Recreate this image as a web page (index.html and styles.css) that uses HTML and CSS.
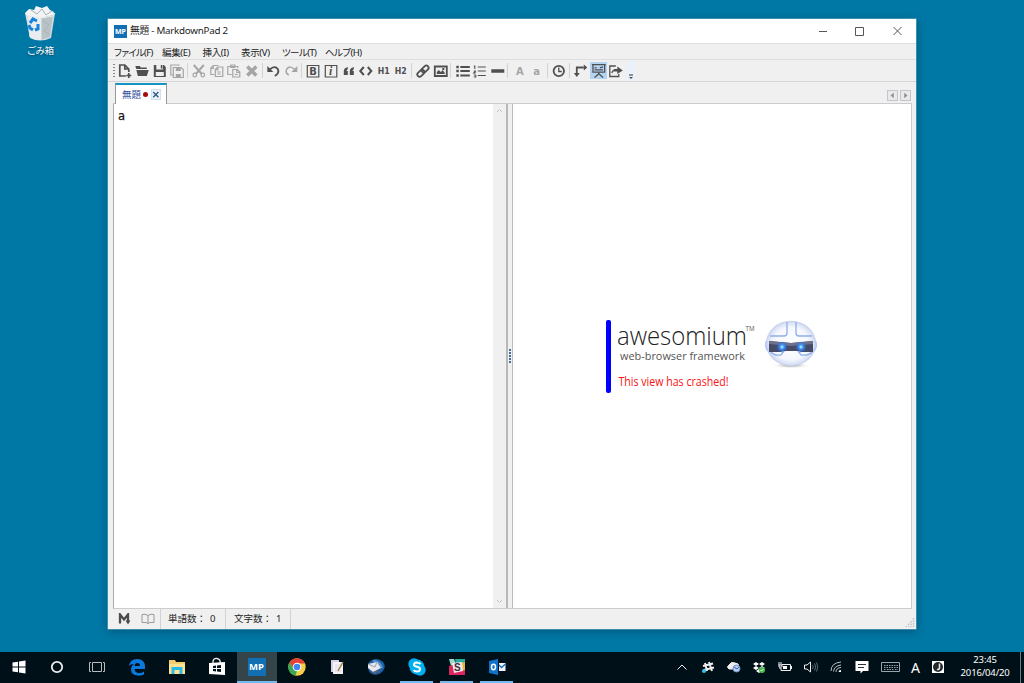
FILE: index.html
```html
<!DOCTYPE html>
<html lang="ja">
<head>
<meta charset="utf-8">
<title>MarkdownPad 2</title>
<link rel="stylesheet" href="styles.css">
</head>
<body>
<main class="desktop">
  <div class="trash">
    <svg width="32" height="36" viewBox="0 0 32 36">
      <path d="M1 8 31 8 27 33Q16 38 6 33Z" fill="#d6dcdf"/>
      <path d="M1 8 5 4 10 5 12 1 18 3 23 1 26 5 30 7 28 11 17 13 4 11Z" fill="#f1f3f4"/>
      <path d="M4 11 17 13 17 35Q9 35 6 32Z" fill="#e9edef"/>
      <path d="M17 13 29 10 26 32 17 35Z" fill="#b9c2c6"/>
      <path d="M7 5 13 9 18 4 22 10 28 6M19 16 25 20 20 26 25 29" stroke="#a9b2b6" fill="none"/>
      <path d="M1 8 4 11 17 13 29 11 31 8M4 11 6 32M17 13V35" stroke="#e6ebed" fill="none"/>
      <path d="M6 18 9 14 13 16M14 19 14 24 11 25M9 25 6 23 5 20" stroke="#1683dc" stroke-width="3" fill="none"/>
    </svg>
    <span>ごみ箱</span>
  </div>

  <section class="window">
    <header class="titlebar">
      <span class="mp small">MP</span><h1>無題 - MarkdownPad 2</h1>
      <svg class="controls" width="90" height="12" viewBox="0 0 90 12" fill="none" stroke="#555"><path d="M1 6.500H9M37.500 2.500H45.500V10.500H37.500ZM75.500 2 83.500 10M83.500 2 75.500 10"/></svg>
    </header>
    <nav class="menu"><span class="m1">ファイル(F)</span><span class="m2">編集(E)</span><span class="m3">挿入(I)</span><span class="m4">表示(V)</span><span class="m5">ツール(T)</span><span class="m6">ヘルプ(H)</span></nav>

    <div class="toolbar">
      <i class="grip"></i>
      <svg viewBox="0 0 16 16"><path d="M9 13H3V2H8L12 6V9M8 2V6H12M12 10V15M9.500 12.500H14.500" stroke-width="1.700"/></svg>
      <svg viewBox="0 0 16 16"><path d="M1.500 3H6L7 4.500H13V6H2.500Z" class="f"/><path d="M2.500 7H15L13 13H4Z" class="f"/></svg>
      <svg viewBox="0 0 16 16"><path d="M2 2H12L14 4V14H2Z" class="f"/><path d="M4.500 2H11V6.500H4.500ZM4 9H12V13H4Z" fill="#eee" stroke="none"/><path d="M9 2H10.500V5.500H9Z" class="f"/></svg>
      <svg class="dim" viewBox="0 0 16 16"><path d="M4 12H2V2H10V3M4.500 4.500H12.500L14.500 6.500V14.500H4.500Z"/><path d="M7 4.500H12V8H7ZM7 11H12V14H7Z" class="f"/></svg>
      <b class="sep"></b>
      <svg class="dim" viewBox="0 0 16 16"><path d="M3 2 11 11M13 2 5 11" stroke-width="2"/><circle cx="4" cy="12" r="1.800"/><circle cx="12" cy="12" r="1.800"/></svg>
      <svg class="dim" viewBox="0 0 16 16"><path d="M5.500 11.500H2V5L4.500 2.500H9V3M6.500 6.500 9 4H14V13.500H6.500ZM9 4V7H6.500M4.500 3V5.500H2M8.500 9H12M8.500 11H12"/></svg>
      <svg class="dim" viewBox="0 0 16 16"><path d="M6 11.500H2V3.500H12V5M5 2H9V4.500H5ZM7 6.500H11.500L14 9V14H7ZM11 6.500V9.500H14M9 11.500H12"/></svg>
      <svg class="dim" viewBox="0 0 16 16"><path d="M3.500 3.500 12.500 12.500M12.500 3.500 3.500 12.500" stroke-width="3.500"/></svg>
      <b class="sep"></b>
      <svg viewBox="0 0 16 16"><path d="M4 6.500Q9 2 12 6Q14 10 9 13" stroke-width="1.800"/><path d="M1.500 3V9H7.500Z" class="f"/></svg>
      <svg class="dim" viewBox="0 0 16 16"><path d="M12 6.500Q7 2 4 6Q2 10 6 12" stroke-width="1.500"/><path d="M14.500 3V9H8.500Z" class="f"/></svg>
      <b class="sep"></b>
      <svg viewBox="0 0 16 16"><path d="M2.500 2.500H14V14H2.500Z"/><text x="4.500" y="12">B</text></svg>
      <svg viewBox="0 0 16 16"><path d="M2.500 2.500H14V14H2.500Z"/><text class="it" x="6.300" y="12.300">i</text></svg>
      <svg viewBox="0 0 16 16"><path d="M3 12V8Q3 5 7 4V6L5.500 8H7V12ZM9 12V8Q9 5 13 4V6L11.500 8H13V12Z" class="f"/></svg>
      <svg viewBox="0 0 16 16"><path d="M6 4 2.500 8 6 12M10 4 13.500 8 10 12" stroke-width="2"/></svg>
      <svg viewBox="0 0 16 16"><text class="hd" x="2" y="11.300" textLength="12" lengthAdjust="spacingAndGlyphs">H1</text></svg>
      <svg viewBox="0 0 16 16"><text class="hd" x="2" y="11.300" textLength="12" lengthAdjust="spacingAndGlyphs">H2</text></svg>
      <b class="sep"></b>
      <svg viewBox="0 0 16 16"><g transform="rotate(-45 8 8)" stroke-width="1.800"><rect x="1" y="6" width="8" height="4.500" rx="2.200"/><rect x="7" y="6" width="8" height="4.500" rx="2.200"/></g></svg>
      <svg viewBox="0 0 16 16"><path d="M2 3.500H14V13H2Z" stroke-width="1.800"/><path d="M4 11V9L6 7 8 9 10 7 12 10V11ZM9.500 5H11.500V7H9.500Z" class="f"/></svg>
      <b class="sep"></b>
      <svg viewBox="0 0 16 16"><path d="M5.500 4H15M5.500 8H15M5.500 12.500H15" stroke-width="1.800"/><path d="M1.500 4H4M1.500 8H4M1.500 12.500H4" stroke-width="2.500"/></svg>
      <svg viewBox="0 0 16 16"><path d="M6 4H14M6 8H14M6 12.500H14M2 3H3V6M2 8H4M2 12H4M4 8 2 10H4M4 12V14H2" stroke-width="1.100"/></svg>
      <svg viewBox="0 0 16 16"><path d="M1.500 8H14.500" stroke-width="3.500"/></svg>
      <b class="sep"></b>
      <svg class="dim" viewBox="0 0 16 16"><text x="4.300" y="12" font-size="11">A</text></svg>
      <svg class="dim" viewBox="0 0 16 16"><text x="4.500" y="12" font-size="11">a</text></svg>
      <b class="sep"></b>
      <svg viewBox="0 0 16 16"><circle cx="8" cy="8" r="5.200" stroke-width="1.800"/><path d="M8 4.500V8.500H11" stroke-width="1.300"/></svg>
      <b class="sep"></b>
      <svg viewBox="0 0 16 16"><path d="M4 10V4.500H11" stroke-width="1.800"/><path d="M11 1.500 14.500 4.500 11 7.500ZM1 10H7L4 14Z" class="f"/></svg>
      <svg class="on" viewBox="0 0 16 16"><path d="M1.500 2.500H14.500M2.500 3V9.500H13.500V3M8 10V12M8 11 4 14.500M8 11 12 14.500M4 5.500H6M4 7.500H12M9 5.500 12 4.500"/></svg>
      <svg viewBox="0 0 16 16"><path d="M8 3H2V13.500H11V11M4 10Q5 6 10 7" stroke-width="1.300"/><path d="M9.500 3.500 15 7.500 9.500 11V8.500H6V6H9.500Z" class="f"/></svg>
      <svg class="over" viewBox="0 0 8 20"><path d="M2 14H6"/><path d="M2 16H6L4 18Z" class="f"/></svg>
    </div>

    <div class="tabs">
      <div class="tab"><span>無題</span><i class="dirty"></i><svg class="close" width="10" height="11" viewBox="0 0 10 11"><path d="M1.500 2.500 8 9M8 2.500 1.500 9"/></svg></div>
      <div class="scrolls"><svg width="11" height="11" viewBox="0 0 11 11"><path d="M7 2V9L3 5.500Z"/></svg><svg width="11" height="11" viewBox="0 0 11 11"><path d="M4 2V9L8 5.500Z"/></svg></div>
    </div>

    <div class="work">
      <div class="editor">a</div>
      <div class="scrollbar"><svg width="7" height="5" viewBox="0 0 7 5"><path d="M1 4 3.500 1.500 6 4"/></svg><svg width="7" height="5" viewBox="0 0 7 5"><path d="M1 1 3.500 3.500 6 1"/></svg></div>
      <div class="splitter"><i></i><i></i><i></i><i></i><i></i></div>
      <div class="preview">
        <div class="crash">
          <div class="bar"></div>
          <svg class="brand" width="214" height="86" viewBox="0 -10 214 86">
            <defs><radialGradient id="orb"><stop offset="0" stop-color="#fff"/><stop offset=".7" stop-color="#f6f8fe"/><stop offset=".9" stop-color="#dbe3f6"/><stop offset="1" stop-color="#c0cce8"/></radialGradient>
            <radialGradient id="eye"><stop offset="0" stop-color="#e5fbff"/><stop offset=".3" stop-color="#48a5ff"/><stop offset="1" stop-color="#145eff" stop-opacity="0"/></radialGradient>
            <radialGradient id="shade"><stop offset="0" stop-color="#888"/><stop offset="1" stop-color="#fff" stop-opacity="0"/></radialGradient></defs>
            <g class="logo">
            <text x="6" y="25" font-size="26.500" font-weight="300" fill="#222" textLength="130" lengthAdjust="spacingAndGlyphs">awesomium</text>
            <text x="134.500" y="10.500" font-size="7.500" fill="#555" textLength="9" lengthAdjust="spacingAndGlyphs">TM</text>
            <text x="9" y="40" font-size="11.500" fill="#555" textLength="125" lengthAdjust="spacingAndGlyphs">web-browser framework</text>
            <text x="7.500" y="65.500" font-size="12" fill="#f91212" textLength="110" lengthAdjust="spacingAndGlyphs">This view has crashed!</text>
            </g>
            <ellipse cx="180" cy="45.500" rx="20" ry="3" fill="url(#shade)"/>
            <ellipse cx="180" cy="23.500" rx="25" ry="22.800" fill="url(#orb)"/>
            <path d="M176 2V13Q176 16 173 16H159M185 2V13Q185 16 188 16H201M160 32Q163 36 170 35L173 31M201 32Q198 36 190 35L187 31" fill="none" stroke="#8eafe6" stroke-width="1.300"/>
            <path d="M155.500 21Q153 26 157 31M204.500 21Q207 26 203 31" fill="none" stroke="#b3c9fb" stroke-width="1.500"/>
            <path d="M158 21 180 23 202 21V32H190L188 31H172L170 32H158Z" fill="#454a66"/>
            <path d="M158 21 180 23 202 21V24L180 26 158 24Z" fill="#6e718a"/>
            <circle cx="171" cy="27" r="6" fill="url(#eye)"/><circle cx="190" cy="27" r="6" fill="url(#eye)"/>
          </svg>
        </div>
      </div>
    </div>

    <footer class="status">
      <div class="modes"><svg width="13" height="12" viewBox="0 0 13 12"><path d="M2 10.500V1.500L6 6.500 10 1.500V8" fill="none" stroke="#4b4b4b" stroke-width="2.300"/><path d="M7.500 7.500H12.500L10 11.500Z" fill="#4b4b4b"/></svg><svg width="14" height="12" viewBox="0 0 14 12" fill="none" stroke="#999"><path d="M7 2.500Q4 .500 1 1.500V9.500H5Q7 10 7 11Q7 10 9 9.500H13V1.500Q10 .500 7 2.500V10"/></svg></div>
      <div class="count c1"><span>単語数：</span><span>0</span></div><div class="count c2"><span>文字数：</span><span>1</span></div>
      <svg class="resize" width="10" height="10" viewBox="0 0 10 10"><path d="M8.500 1V10M6 4V10M3.500 6.500V10M1 9V10" stroke="#bcc1c9" stroke-width="1.500" stroke-dasharray="1.500 1"/></svg>
    </footer>
  </section>
</main>

<footer class="taskbar">
  <div class="apps">
    <div class="start"><svg width="14" height="14" viewBox="0 0 14 14" fill="#fff"><path d="M.500 2.500 6 1.700V6.500H.500ZM7 1.500 13.500.500V6.500H7ZM.500 7.500H6V12.300L.500 11.500ZM7 7.500H13.500V13.500L7 12.500Z"/></svg></div>
    <div><svg width="14" height="14" viewBox="0 0 14 14"><circle cx="7" cy="7" r="5.200" fill="none" stroke="#eee" stroke-width="1.800"/></svg></div>
    <div><svg width="18" height="14" viewBox="0 0 18 14" fill="none" stroke="#bbb"><path d="M4.500 2.500H13.500V11.500H4.500ZM3 2.500H1.500V11.500H3M15 2.500H16.500V11.500H15"/></svg></div>
    <div><svg width="18" height="18" viewBox="0 0 18 18"><path d="M1 8Q2 1 9 1Q17 1 17 9V11H6.500Q7 15 11 15Q14 15 16 13.500V16.500Q13 18 9.500 17.500Q3 17 3 11.500Q3 8 6 6Q3 5.500 1 8ZM6.500 8H12Q12 5 9.500 5Q7 5 6.500 8Z" fill="#0b78dc" fill-rule="evenodd"/></svg></div>
    <div><svg width="18" height="16" viewBox="0 0 18 16"><path d="M1 1H7L8 3H17V15H1Z" fill="#f5cd6a"/><path d="M1 5H17V15H1Z" fill="#ffe294"/><path d="M3.500 15V8H14.500V15H11.500V11H6.500V15Z" fill="#28b9e7"/></svg></div>
    <div><svg width="18" height="20" viewBox="0 0 18 20"><path d="M5 7V4Q6 1 9 1.500Q13 2 12 7" fill="none" stroke="#eee" stroke-width="1.300"/><path d="M1 6 17 5V18L1 17Z" fill="#fff"/><path d="M5 9 8 8.500V11H5ZM9 8.500 13 8V11H9ZM5 12H8V14.500L5 14ZM9 12H13V15L9 14.500Z" fill="#001018"/></svg></div>
    <div class="active"><span class="mp">MP</span></div>
    <div><svg width="18" height="18" viewBox="0 0 18 18"><circle cx="9" cy="9" r="8.700" fill="#f7ce45"/><path d="M1.500 4.500A8.700 8.700 0 0 1 17 5.500H9L5.500 11Z" fill="#e24236"/><path d="M1.500 4.500 5.500 11 9 13 7.500 17.600A8.700 8.700 0 0 1 1.500 4.500Z" fill="#34a853"/><circle cx="9" cy="9" r="4.300" fill="#fff"/><circle cx="9" cy="9" r="3.300" fill="#4285f4"/></svg></div>
    <div><svg width="16" height="16" viewBox="0 0 16 16"><path d="M2 1H10V13H2Z" fill="#d5cfdf"/><path d="M4 3H14V15H4Z" fill="#f4f3f8"/><path d="M6 6H12M6 8H12M6 10H10M6 12H13" stroke="#dcd9e6"/><path d="M9 12 14 3" stroke="#a87945" stroke-width="1.500"/></svg></div>
    <div><svg width="19" height="18" viewBox="0 0 19 18"><path d="M5 2Q11-1 16 4Q20 9 15 14Q11 18 5 16Q1 14 1 8Q1 4 5 2Z" fill="#1d61a8"/><path d="M6 3Q13 3 15 10" fill="none" stroke="#5d99d5" stroke-width="2"/><path d="M1 6 10 4 14 10 6 14 1 10Z" fill="#e8e8ec"/><path d="M1 6 8 9 10 4" fill="none" stroke="#999eb1"/><path d="M2 11 6 14 12 12 8 16Z" fill="#77605e"/></svg></div>
    <div class="running"><svg width="18" height="18" viewBox="0 0 18 18"><circle cx="6" cy="6" r="5.700" fill="#00aff0"/><circle cx="12" cy="12" r="5.700" fill="#00aff0"/><circle cx="9" cy="9" r="7.500" fill="#00aff0"/><path d="M12.500 6Q11 4.500 8.500 4.500Q6 4.700 6 6.700Q6 8.200 9 8.800Q12 9.500 12 11Q12 13.500 9 13.500Q6.500 13.500 5.500 12" fill="none" stroke="#fff" stroke-width="2"/></svg></div>
    <div class="running"><svg width="18" height="18" viewBox="0 0 18 18"><path d="M1 1H6L8 6 3 8Z" fill="#9cdad2"/><path d="M7 1H17V5L8 7Z" fill="#25ae9a"/><path d="M12 5 17 4V13L14 14Z" fill="#e9b533"/><path d="M1 8 5 7 7 14 17 12V17H1Z" fill="#dc245e"/><path d="M4 5 14 4 15 13 6 15Z" fill="#f1e9ea"/><text x="6" y="13" font-family="Liberation Sans" font-weight="700" font-size="10" fill="#462a3a">S</text></svg></div>
    <div class="running"><svg width="18" height="18" viewBox="0 0 18 18"><path d="M1 3 10 1V17L1 15Z" fill="#0f73cb"/><path d="M11 5H17.500V13H11Z" fill="#eef5fc"/><path d="M11 7 13.500 9.500 17.500 6" fill="none" stroke="#126dc0" stroke-width="1.300"/><ellipse cx="5.500" cy="9" rx="2" ry="2.700" fill="none" stroke="#fff" stroke-width="1.500"/></svg></div>
  </div>
  <div class="tray">
    <div><svg viewBox="0 0 16 16"><path d="M3.500 10.500 8 6 12.500 10.500"/></svg></div>
    <div><svg viewBox="0 0 16 16"><path d="M5 4 7 12M9 3 12 12M3 7 13 4.500M4 11 14 8.500" stroke-width="2"/><circle cx="4" cy="12" r="2" fill="#31c6ed" stroke="none"/></svg></div>
    <div><svg viewBox="0 0 16 16"><path d="M3 10Q0 8 3 6Q5 2 9 4Q13 4 13 8V10Z" fill="#eee"/><circle cx="10.500" cy="9.500" r="3.500" fill="#b8cdf0" stroke="#6f91c9"/><path d="M8 8 11 10 13 8" stroke="#3464b4"/></svg></div>
    <div><svg viewBox="0 0 16 16"><path d="M2 5 5 3 8 5 11 3 14 5 11 7 14 9 11 11 8 9 5 11 2 9 5 7ZM5 12 8 10 11 12 8 14Z" fill="#fff" stroke="none"/><path d="M5 7 8 5 11 7 8 9Z" fill="#001018" stroke="none"/><circle cx="11" cy="11" r="3" fill="#44bd4a" stroke="none"/><path d="M9.500 11 10.500 12 12.500 10"/></svg></div>
    <div><svg viewBox="0 0 16 16"><path d="M5 5.500H13.500V11.500H4V9M14.500 7V10M2 3V6M4 3V6M1.500 6H5V8H2V6M3 8V10"/><path d="M6 7H10V10H6Z" fill="#fff" stroke="none"/></svg></div>
    <div><svg viewBox="0 0 16 16"><path d="M1.500 6H4L7.500 3V13L4 10H1.500Z"/><path d="M9.500 6Q11 8 9.500 10M11.500 4.500Q14 8 11.500 11.500M13.500 3.500Q16 8 13.500 12.500" stroke="#718087" stroke-width=".800"/></svg></div>
    <div><svg viewBox="0 0 16 16"><path d="M3 12Q3 4 13 3M5.500 12.500Q6 7 13 6M8 13Q8 9 13 8.500" stroke="#b9c0c3"/><path d="M10.500 13Q10.500 11 13 11V13Z" fill="#fff" stroke="none"/></svg></div>
    <div><svg viewBox="0 0 16 16"><path d="M1.500 2H14.500V12H9L6.500 14.500V12H1.500Z" fill="#fff" stroke="none"/><path d="M4 5.500H12M4 8.500H10" stroke="#26343a"/></svg></div>
    <div class="kbd"><svg width="19" height="12" viewBox="0 0 19 12"><path d="M.500 1.500H18.500V10.500H.500Z"/><path d="M3 4.500H17M3 6.500H17M3 8.500H5M6 8.500H13M14 8.500H17" stroke-dasharray="1.500 1"/></svg></div>
    <div class="ime">A</div>
    <div class="input"><svg viewBox="0 0 16 16"><path d="M2 2H14V14H2Z" fill="#fff" stroke="none"/><circle cx="8" cy="8" r="5" fill="#20292e" stroke="none"/><path d="M9.500 4.500V9Q9 11 7 10.500" stroke-width="1.500"/></svg></div>
  </div>
  <div class="clock"><span>23:45</span><span class="date">2016/04/20</span></div>
</footer>
</body>
</html>
```
FILE: styles.css
```css
* { box-sizing: border-box; }
body { margin: 0; width: 1024px; height: 683px; display: flex; flex-direction: column; overflow: hidden; background: #0078a5; font-family: "Noto Sans", "Noto Sans CJK JP", sans-serif; color: #222; }
svg { display: block; flex: none; }
.desktop { height: 652px; flex: none; display: flex; align-items: flex-start; }
.trash { width: 108px; padding: 5px 28px 0 0; display: flex; flex-direction: column; align-items: center; color: #fff; font: 9.500px/16px "Noto Sans CJK JP", sans-serif; }
.trash span { letter-spacing: -.6px; white-space: nowrap; margin-top: 1px; text-shadow: 0 1px 2px #003d5a; }
.window { width: 808px; height: 610px; margin-top: 19px; background: #f0f0f0; display: flex; flex-direction: column; box-shadow: 0 0 0 .5px #78b8cf, 0 2px 9px #003a5c99; }
.titlebar { height: 25px; flex: none; display: flex; align-items: center; background: #fff; border-bottom: 1px solid #dedede; padding-left: 6px; }
.mp { width: 18px; height: 18px; display: flex; align-items: center; justify-content: center; background: #136fb4; color: #fff; font: 700 9.500px/18px "Noto Sans", sans-serif; }
.mp.small { width: 13px; height: 13px; font-size: 7px; line-height: 13px; }
.titlebar h1 { margin: 0 0 0 3px; font-weight: 400; font-size: 9.800px; line-height: 20px; letter-spacing: -.27px; white-space: nowrap; }
.controls { margin: 0 8px 0 auto; }
.menu { height: 16px; flex: none; display: flex; padding-left: 6px; border-bottom: 1px solid #dedede; font-size: 9.500px; line-height: 17px; white-space: nowrap; }
.menu span { letter-spacing: -.35px; }
.m1 { width: 48px; letter-spacing: -.7px !important; } .m2 { width: 40.500px; } .m3 { width: 38.500px; } .m4 { width: 41px; } .m5 { width: 43px; }
.m1, .m5, .m6 { font-feature-settings: "palt"; }
.m5, .m6 { letter-spacing: -.6px !important; }
.toolbar { height: 22px; flex: none; display: flex; align-items: center; padding-left: 5px; border-bottom: 1px solid #d5d5d5; }
.grip { width: 2px; height: 13px; margin: 0 .5px 0 0; background: repeating-linear-gradient(#888 0 1px, transparent 1px 3px); }
.toolbar svg { width: 17.600px; height: 16px; fill: none; stroke: #505050; stroke-width: 1.200; }
.toolbar .f { fill: #505050; stroke: none; }
.toolbar text { fill: #505050; stroke: none; font: 700 10px "DejaVu Sans", sans-serif; }
.toolbar .it { font: italic 700 12px "Liberation Serif", serif; }
.toolbar .hd { font-size: 9px; }
.toolbar .dim { stroke: #a5a5a5; }
.toolbar .dim .f, .toolbar .dim text { fill: #a5a5a5; }
.toolbar .on { background: #b4d4f4; height: 17px; }
.toolbar .over { width: 8px; height: 20px; margin-left: 2px; background: #e9f1fa; }
.sep { width: 4.300px; height: 15px; border-left: 1px solid #d2d2d2; margin-left: 1px; margin-right: -1px; }
.tabs { height: 21px; flex: none; display: flex; justify-content: space-between; padding: 1px 5px 0 7px; }
.tab { width: 52px; height: 21px; background: #fff; border: 1px solid #999; border-top: 2px solid #1496c5; border-bottom: 0; display: flex; align-items: center; padding-left: 6px; z-index: 1; font: 9.500px/17px "Noto Sans CJK JP", sans-serif; color: #3550a0; }
.dirty { width: 5px; height: 5px; margin-left: 2px; border-radius: 50%; background: #a60b10; }
.close { margin-left: 3px; background: #edf2f7; border: 1px solid #d3e0ed; fill: none; stroke: #285b91; stroke-width: 1.700; }
.scrolls { display: flex; gap: 2px; padding: 7px 0 0; }
.scrolls svg { border: 1px solid #c4c4ce; background: #e9e9e9; fill: #8e8e94; }
.work { height: 506px; flex: none; margin: 0 4px 0 5px; display: flex; border: 1px solid #ccc; border-left-color: #aaa; background: #fff; }
.editor { width: 379px; flex: none; padding: 3px 4px; font: 500 11.500px/18px "DejaVu Sans", sans-serif; color: #111; -webkit-text-stroke: .25px #111; }
.scrollbar { width: 13px; flex: none; display: flex; flex-direction: column; justify-content: space-between; align-items: center; padding: 4px 0; background: #f0f0f0; fill: none; stroke: #c4c4c4; }
.splitter { width: 7px; flex: none; border-left: 2px solid #b8b8b8; border-right: 1px solid #bbb; background: #f0f0f0; display: flex; flex-direction: column; justify-content: center; align-items: center; gap: 1px; }
.splitter i { width: 2px; height: 2px; background: #416da4; }
.preview { flex: 1; padding: 216px 0 0 93px; }
.crash { display: flex; height: 76px; }
.bar { width: 5px; height: 73px; border-radius: 2px; background: #00f; }
.brand { margin-top: -10px; }
.logo text { font-family: "Open Sans", "Noto Sans", sans-serif; }
.status { flex: 1; display: flex; font-size: 9.500px; line-height: 19px; }
.modes { width: 52px; display: flex; align-items: center; padding-left: 10px; gap: 10px; }
.count { width: 66px; display: flex; gap: 4px; padding-left: 7px; border-left: 1px solid #d3d3d3; white-space: nowrap; }
.c1 { width: 65px; } .c2 { border-right: 1px solid #d3d3d3; padding-left: 8px; }
.resize { margin: 8px 1px 0 auto; }
.taskbar { height: 31px; flex: none; display: flex; background: #001018; color: #fff; }
.apps { display: flex; width: 670px; margin-left: -3.500px; }
.apps > div { width: 40px; height: 30px; display: flex; align-items: center; justify-content: center; }
.apps .start { padding-left: 5px; }
.apps .active { height: 31px; background: #344449; border-bottom: 2px solid #76b9ed; }
.apps .running { height: 31px; padding-bottom: 1px; background: linear-gradient(#76b9ed, #76b9ed) 50% 100% / 33px 2px no-repeat; }
.tray { width: 286px; display: flex; padding-left: 4.500px; }
.tray > div { width: 25.700px; height: 30px; display: flex; align-items: center; justify-content: center; }
.tray svg { width: 16px; height: 16px; fill: none; stroke: #eee; }
.tray .kbd svg { width: 19px; height: 12px; stroke: #9aa5ab; }
.tray .kbd { width: 29px; padding-left: 2px; }
.tray .ime { width: 23px; font: 14px "Noto Sans", sans-serif; }
.tray .input { width: 23px; }
.clock { width: 71px; margin-right: 3px; border-right: 1px solid #718087; display: flex; flex-direction: column; align-items: center; font: 9.500px/13px "Noto Sans", sans-serif; padding: 1px 0 0; letter-spacing: -.15px; }
```
